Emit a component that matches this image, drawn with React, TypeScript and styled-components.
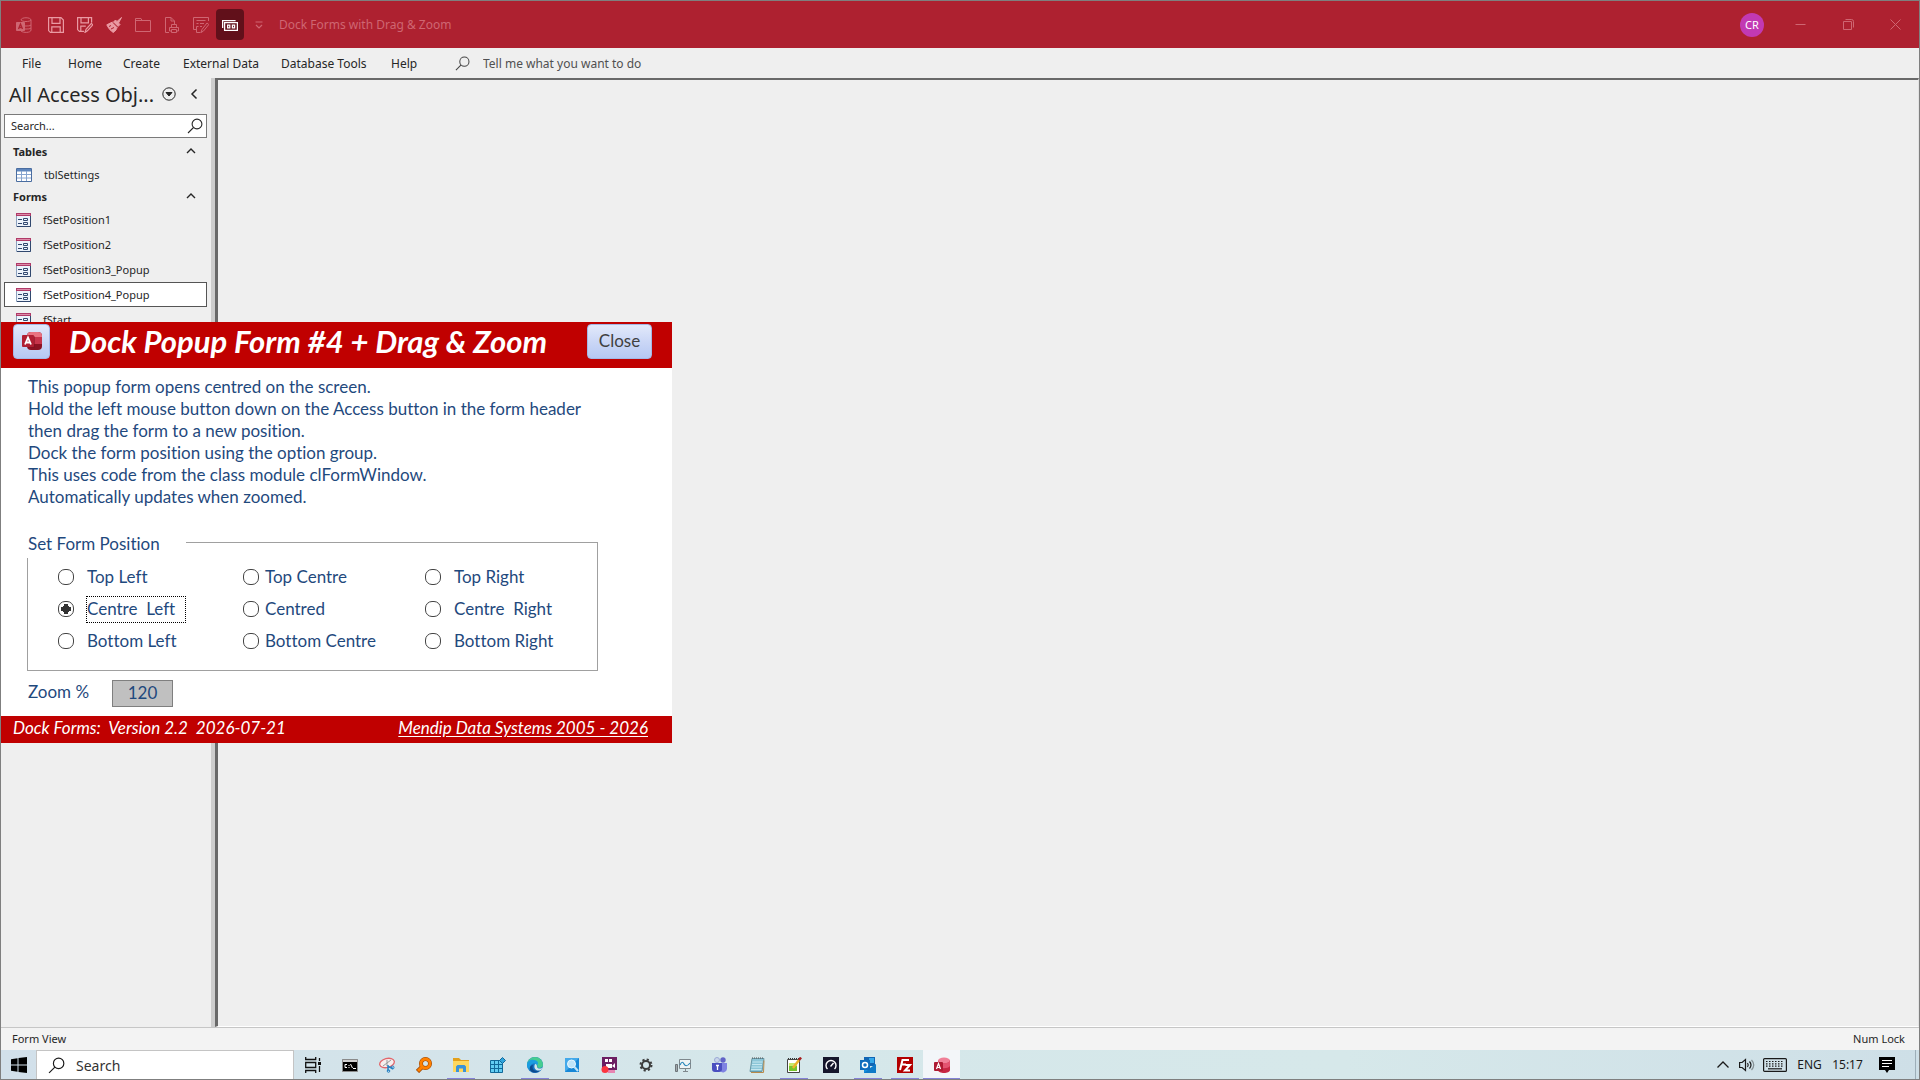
import React, { useState } from "react";
import styled, { createGlobalStyle, css } from "styled-components";

const ui = `"Noto Sans", "Open Sans", sans-serif`;
const form = `Lato, "Open Sans", sans-serif`;

const Global = createGlobalStyle`
  *, *::before, *::after { box-sizing: border-box; }
  body { margin: 0; font-family: ${ui}; color: #262626; overflow: hidden; }
  button, input { font: inherit; color: inherit; }
  button { border: 0; padding: 0; background: none; }
`;

const Screen = styled.div`
  position: relative;
  display: flex;
  flex-direction: column;
  height: 100vh;
  border: 1px solid #7f7f7f;
  background: #efefef;
  font-size: 12px;
`;

/* title bar */
const TitleBar = styled.header`
  display: flex;
  align-items: center;
  flex: 0 0 47px;
  padding-left: 9px;
  background: #ae2130;
  color: #cf6672;
`;
const AppMark = styled.span`
  display: grid;
  place-items: center;
  width: 28px;
  margin-right: 4px;
`;
const QuickBar = styled.div`
  display: flex;
  gap: 1px;
`;
const QuickButton = styled.button<{ $on?: boolean; $bright?: boolean }>`
  display: grid;
  place-items: center;
  width: 28px;
  height: 31px;
  border-radius: 4px;
  color: ${(p) => (p.$on ? "#fff" : p.$bright ? "#ea9aa3" : "#cf6672")};
  background: ${(p) => (p.$on ? "#61101a" : "transparent")};
`;
const DocTitle = styled.span`
  flex: 1;
  margin-left: 6px;
`;
const Avatar = styled.button`
  width: 24px;
  height: 24px;
  margin-right: 12px;
  border-radius: 50%;
  background: #c239b3;
  color: #fff;
  font-size: 11px;
`;
const WindowButton = styled.button`
  display: grid;
  place-items: center;
  width: 48px;
  height: 46px;
  &:last-child { width: 47px; }
`;

/* ribbon tabs */
const MenuBar = styled.nav`
  display: flex;
  align-items: center;
  flex: 0 0 30px;
  padding-left: 21px;
`;
const MenuItem = styled.button<{ $w: number }>`
  width: ${(p) => p.$w}px;
  text-align: left;
`;
const TellMe = styled.label`
  display: flex;
  align-items: center;
  gap: 13px;
  color: #444;
`;
const TellInput = styled.input`
  width: 220px;
  padding: 0;
  border: 0;
  outline: 0;
  background: none;
  &::placeholder { color: #505050; opacity: 1; }
`;

/* work area */
const Work = styled.div`
  display: flex;
  flex: 1;
  min-height: 0;
`;
const NavPane = styled.aside`
  flex: 0 0 208px;
  padding: 0 4px 0 3px;
`;
const NavHead = styled.div`
  display: flex;
  align-items: center;
  gap: 5px;
  height: 32px;
  padding: 0 3px 0 5px;
`;
const NavTitle = styled.h1`
  flex: 1;
  margin: 0;
  font-size: 20px;
  font-weight: 400;
  line-height: 30px;
  padding-top: 2px;
  white-space: nowrap;
`;
const NavIcon = styled.button`
  display: grid;
  place-items: center;
  width: 20px;
  height: 28px;
`;
const NavSearch = styled.label`
  display: flex;
  align-items: center;
  height: 24px;
  margin: 4px 0;
  padding: 0 3px 0 6px;
  border: 1px solid #7a7a7a;
  background: #fff;
`;
const NavInput = styled.input`
  flex: 1;
  min-width: 0;
  padding: 0 0 2px;
  border: 0;
  outline: 0;
  font-size: 11px;
  background: none;
  &::placeholder { color: #262626; opacity: 1; }
`;
const GroupHead = styled.button`
  display: flex;
  align-items: center;
  justify-content: space-between;
  width: 100%;
  height: 20px;
  padding: 0 11px 2px 9px;
  font-size: 11px;
  font-weight: 700;
`;
const NavItem = styled.button<{ $on?: boolean }>`
  display: flex;
  align-items: center;
  gap: 12px;
  width: 100%;
  height: 25px;
  padding: 0 11px;
  border: 1px solid ${(p) => (p.$on ? "#555" : "transparent")};
  background: ${(p) => (p.$on ? "#fff" : "transparent")};
  font-size: 11px;
`;
const Splitter = styled.div`
  flex: 0 0 4px;
  background: #cdcdcd;
`;
const Canvas = styled.main`
  flex: 1;
  border: 1px solid #fff;
  border-top: 2px solid #696969;
  border-left: 3px solid #696969;
  border-right-color: #e3e3e3;
`;
const StatusBar = styled.footer`
  display: flex;
  align-items: center;
  justify-content: space-between;
  flex: 0 0 23px;
  padding: 0 14px 1px 11px;
  border-top: 1px solid #c6c6c6;
  background: #f3f3f3;
  font-size: 11px;
`;

/* taskbar */
const TaskBar = styled.div`
  display: flex;
  flex: 0 0 29px;
  background: linear-gradient(90deg, #d2e0ea, #d5e7ea 40%, #d6e8ea 70%, #cedfe7);
  color: #1a1a1a;
`;
const StartButton = styled.button`
  display: grid;
  place-items: center;
  width: 35px;
`;
const TaskSearch = styled.label`
  display: flex;
  align-items: center;
  gap: 11px;
  width: 258px;
  padding-left: 11px;
  border: 1px solid #c4c4c4;
  border-bottom: 0;
  background: #fff;
`;
const TaskInput = styled.input`
  width: 180px;
  padding: 0;
  border: 0;
  outline: 0;
  font-size: 14px;
  &::placeholder { color: #333; opacity: 1; }
`;
const Apps = styled.div`
  display: flex;
  flex: 1;
`;
const AppButton = styled.button<{ $open?: boolean; $on?: boolean }>`
  display: grid;
  place-items: center;
  width: 37px;
  background: ${(p) => (p.$on ? "#f3f6f9" : "transparent")};
  ${(p) =>
    (p.$open || p.$on) &&
    css`
      background-image: linear-gradient(#8482d6, #8482d6);
      background-repeat: no-repeat;
      background-position: center bottom;
      background-size: ${p.$on ? "100%" : "28px"} 1px;
    `}
`;
const Tray = styled.div`
  display: flex;
  align-items: center;
`;
const TrayButton = styled.button<{ $w: number }>`
  display: grid;
  place-items: center;
  width: ${(p) => p.$w}px;
  height: 100%;
`;
const ShowDesktop = styled.button`
  width: 4px;
  height: 100%;
  margin-left: 8px;
  border-left: 1px solid #9daeb8;
`;

/* popup form window */
const Popup = styled.section`
  position: absolute;
  left: 0;
  top: 321px;
  width: 671px;
  background: #fff;
  color: #1f497d;
  font-family: ${form};
  font-size: 17px;
  font-variant-ligatures: none;
`;
const PopupHead = styled.header`
  display: flex;
  align-items: flex-start;
  height: 46px;
  padding: 2px 20px 0 12px;
  background: #c00000;
`;
const FormButton = styled.button<{ $w: number }>`
  display: grid;
  place-items: center;
  width: ${(p) => p.$w}px;
  height: 35px;
  padding-bottom: 2px;
  border: 1px solid #a4b8e6;
  border-radius: 4px;
  background: linear-gradient(#e2e9fa, #cbd7f6 50%, #b6c8f3);
  color: #404040;
`;
const PopupTitle = styled.h2`
  flex: 1;
  margin: 0;
  padding-left: 19px;
  color: #fff;
  font-size: 31px;
  font-style: italic;
  font-weight: 700;
  line-height: 34px;
  white-space: nowrap;
`;
const PopupBody = styled.div`
  padding: 8px 27px 9px;
`;
const Lines = styled.p`
  margin: 0 0 18px;
  line-height: 22px;
`;
const Options = styled.fieldset`
  width: 571px;
  margin: 0 0 9px -1px;
  padding: 3px 0 13px 30px;
  border: 1px solid #a0a0a0;
`;
const Legend = styled.legend`
  width: 159px;
  height: 32px;
  margin-left: -31px;
  padding-left: 1px;
  background: #fff;
  line-height: 36px;
`;
const OptionGrid = styled.div`
  display: grid;
  grid-template-columns: 185px 182px 1fr;
  grid-auto-rows: 32px;
`;
const Option = styled.label<{ $gap: number }>`
  display: flex;
  align-items: center;
  gap: ${(p) => p.$gap}px;
`;
const Radio = styled.input`
  appearance: none;
  display: grid;
  place-items: center;
  width: 16px;
  height: 16px;
  margin: 0;
  border: 1px solid #444;
  border-radius: 7px;
  background: #fff;
  &:checked::before {
    content: "";
    width: 10px;
    height: 10px;
    background: #333;
    clip-path: polygon(30% 0, 70% 0, 70% 20%, 80% 20%, 80% 30%, 100% 30%, 100% 70%, 80% 70%, 80% 80%, 70% 80%, 70% 100%, 30% 100%, 30% 80%, 20% 80%, 20% 70%, 0 70%, 0 30%, 20% 30%, 20% 20%, 30% 20%);
  }
`;
const OptionText = styled.span<{ $focus?: boolean }>`
  height: 25px;
  line-height: 24px;
  padding-right: 10px;
  white-space: pre;
  outline: ${(p) => (p.$focus ? "1px dotted #000" : "0")};
`;
const ZoomRow = styled.div`
  display: flex;
  align-items: center;
`;
const ZoomLabel = styled.label`
  width: 84px;
  height: 27px;
  line-height: 24px;
`;
const ZoomInput = styled.input`
  width: 61px;
  height: 27px;
  padding: 0 0 2px;
  border: 1px solid #7f7f7f;
  background: #c0c0c0;
  text-align: center;
`;
const PopupFoot = styled.footer`
  display: flex;
  justify-content: space-between;
  height: 27px;
  padding: 0 24px 0 12px;
  background: #c00000;
  color: #fff;
  font-style: italic;
  line-height: 23px;
  white-space: pre;
`;
const FootLink = styled.a`
  color: inherit;
  text-underline-offset: 2px;
`;

/* icons */
type Kids = { children: React.ReactNode; s?: number; w?: number; sw?: number };
const Line = ({ children, s = 16, w, sw = 1 }: Kids) => (
  <svg width={w ?? s} height={s} viewBox={`0 0 ${w ?? s} ${s}`} fill="none" stroke="currentColor" strokeWidth={sw} aria-hidden="true">
    {children}
  </svg>
);
const Magnifier = ({ s = 16 }: { s?: number }) => (
  <svg width={s} height={s} viewBox="0 0 16 16" fill="none" stroke="currentColor" strokeWidth="1.1" aria-hidden="true">
    <circle cx="10" cy="6" r="4.9" />
    <path d="M6.5 9.5 1 15" />
  </svg>
);
const Up = () => (
  <Line s={10} sw={1.4}><path d="M1 7l4-4 4 4" /></Line>
);

const quick: [string, boolean, boolean, React.ReactNode][] = [
  ["Save", true, false, <Line sw={1.2}><path d="M.6.6h12.4l2.4 2.4v12.4H2.4L.6 13.6zM4 .6v5.8h8V.6M3.8 15.4V9.8h8.4v5.6" /></Line>],
  ["Save As", true, false, <Line sw={1.2}><path d="M7 14.4H2.4L.6 12.6V.6h14v5M4 .6v5.2h7.4V.6M3.8 14.4V9.2h5M8 15.4l1-3 5.4-6 1.4 1.4-5.4 6z" /></Line>],
  ["Format Painter", true, false, <Line><path fill="currentColor" d="M15.5.5 11 4.5 9.500 3 7.500 5 12 9.500 14 7.500 12.500 6z" /><path fill="currentColor" d="M6.500 5 .8 7.800C2 10.500 4.500 14 7.300 15.500 9.500 14 10.800 12 11.200 10z" /><path stroke="#ae2130" d="M7 5.500 11.500 10M3 9.500l2-1M5 12l3-1.500" /></Line>],
  ["Open", false, false, <Line><path d="M.5 1.500h5.500l1 2h8.500v11H.5zM.5 3.500h6.500" /></Line>],
  ["Print Preview", false, false, <Line><path d="M5 15.500H1.500V.5H7L10.500 4v3M7 .5V4h3.500M7.500 10.500V7.500h5v3M7.500 14H5.500v-3.500h9V14h-2M7.500 12.500h5v3h-5z" /></Line>],
  ["Edit List", false, false, <Line><path d="M3 12.500H.5V.5h15V4M3.500 3.500h9M3.500 6.500h2M7 6.500h4M3.500 9.500h2M3.500 15.500V9.500M7 9.500h2M3.500 15.500h4M8 15.500l1-3L14 6l1.800 1.500L10.500 14z" /></Line>],
  ["Navigation Options", false, true, <Line sw={1.3}><path d="M.6 11V3.600h13M2.600 5.600h12.800v7.800H2.600zM5.600 8.200h2.200v2.600H5.600zM10.400 8.200h2.200v2.600h-2.200z" /></Line>],
  ["Customize", false, false, <Line s={8} sw={1.2}><path d="M.5 1h7M1 4l3 3 3-3" /></Line>],
];

const TableIcon = () => (
  <svg width="16" height="14" viewBox="0 0 16 14" aria-hidden="true">
    <path fill="#fff" stroke="#4a6da0" d="M.5.5h15v13H.5z" />
    <path fill="#5f86bd" d="M1 1h14v2.500H1z" />
    <path stroke="#86a4cf" d="M1 6.500h14M1 10h14M5.500 3v10M10.500 3v10" />
  </svg>
);
const FormIcon = () => (
  <svg width="15" height="14" viewBox="0 0 15 14" aria-hidden="true">
    <path fill="#edf3fb" stroke="#8ba0bd" d="M.5.5h14v13H.5z" />
    <path fill="#b03a68" d="M0 0h15v3H0z" />
    <path fill="#dd8ca9" d="M1 1h13v1H1z" />
    <path stroke="#31486e" fill="none" d="M2 6.500h4M2 10.500h4M7.500 5.500h4v2h-4zM7.500 9.500h4v2h-4zM14.500 3v10.500H1" />
  </svg>
);
const AccessIcon = ({ s = 20 }: { s?: number }) => (
  <svg width={s} height={s} viewBox="0 0 20 20" aria-hidden="true">
    <rect x="5" y="1" width="15" height="18" rx="4" fill="#8c1222" />
    <path fill="#e97381" d="M5 5a4 4 0 0 1 4-4h7a4 4 0 0 1 4 4v3H5z" />
    <path fill="#c7344a" d="M5 6h15v7H5z" />
    <path fill="#7c0f1e" d="M7 5h5a1 1 0 0 1 1 1v10a1 1 0 0 1-1 1H6z" opacity=".5" />
    <rect x="0" y="4" width="12" height="12" rx="1" fill="#b01f33" />
    <path fill="none" stroke="#fff" strokeWidth="1.800" d="m3 13.500 3-7 3 7M4 11.500h4" />
  </svg>
);

const Pic = ({ children, w = 16 }: { children: React.ReactNode; w?: number }) => (
  <svg width={w} height="16" viewBox={`0 0 ${w} 16`} fill="none" aria-hidden="true">{children}</svg>
);
const apps: [string, string, React.ReactNode][] = [
  ["Task View", "", <Pic><path stroke="#111" strokeWidth="1.300" d="M.7 0v2.500h10V0M.7 16v-2.500h10V16M.7 5.500h10v5H.7zM14.500 1v3M14.500 9v6" /><path fill="#111" d="M13 5h3v3h-3z" /></Pic>],
  ["Command Prompt", "", <Pic><path fill="#000" stroke="#8a8a8a" d="M.5 2.500h15v12H.5z" /><path fill="#cfcfcf" d="M1 3h14v2H1z" /><path stroke="#fff" d="M5 7.500H3v3h2M7 8v1M7 10v1M8.500 7l2 4M11 11.500h3" /></Pic>],
  ["Snipping Tool", "", <Pic><ellipse cx="8" cy="6" rx="7.500" ry="4.500" transform="rotate(-15 8 6)" fill="#f7eeee" stroke="#e2666b" strokeWidth="1.300" /><path stroke="#999" d="m4 9 8-6M8 3v6" /><path stroke="#2581c4" strokeWidth="1.500" d="M9 8v6M9 9.500l5 2" /><circle cx="13.500" cy="10.500" r="1.500" stroke="#2581c4" /><circle cx="9.500" cy="14" r="1.300" stroke="#2581c4" /></Pic>],
  ["Everything", "", <Pic><path stroke="#9d4500" strokeWidth="4.500" d="M1.500 14.500 6 10" /><circle cx="9.500" cy="6.500" r="4.500" stroke="#9d4500" strokeWidth="4" /><path stroke="#ff8000" strokeWidth="3" d="M2 14 6.500 9.500" /><circle cx="9.500" cy="6.500" r="4.500" stroke="#ff8000" strokeWidth="2.800" /></Pic>],
  ["File Explorer", "open", <Pic><path fill="#e3a01b" d="M0 1h6l2 2h8v3H0z" /><path fill="#ffd75e" d="M0 4h16v11H0z" /><path fill="#3b93d9" d="M3 15V9.500L4.500 8h7L13 9.500V15h-3v-3.500H6V15z" /></Pic>],
  ["Registry Editor", "", <Pic><path fill="#62cdf3" stroke="#11699a" d="M.5 3.500h12v12H.5z" /><path stroke="#11699a" d="M4.500 3.500v12M8.500 3.500v12M.5 7.500h12M.5 11.500h12" /><path fill="#30a4dc" stroke="#11699a" d="m12.500.5 3 3-3 3-3-3z" /></Pic>],
  ["Microsoft Edge", "open", <Pic><circle cx="8" cy="8" r="8" fill="#1674c4" /><path fill="#46cd91" d="M0 8A8 8 0 0 1 16 8c0 3-4 4-6 2 1-1 0-4-3-4-4 0-7 2-7 2" /><path fill="#1c9de0" d="M0 8c0-3 3-6 7-5 4 0 5 4 3 5-2-3-8-2-7 5-2-1-3-3-3-5" /><path fill="#0c4b8e" d="M6 8c-2 5 3 7 7 5-2 3-6 3-8 2-4-3-2-7 1-7" /><path fill="#d5e7ea" d="M8 7c2 0 2 2 2 3 1 2 4 2 6 0l-2 3c-5 2-8-2-6-6" /></Pic>],
  ["Search Tool", "", <Pic><path fill="#1787d6" d="M1 1h14v14H1z" /><path fill="#43a9ea" d="M1 1h14l-14 14z" /><circle cx="7.500" cy="7" r="4" fill="#bfe4f8" stroke="#e9f7ff" /><path stroke="#bfe4f8" strokeWidth="2" d="m10.500 10 3.500 4" /></Pic>],
  ["Screen Recorder", "", <Pic><path fill="#6c1f63" d="M1 0h15v13H1z" /><path fill="#fff" d="M4 2h3v3H4zM8 2h3v3H8zM5 7h6v4H5zM11 9l3-3v5z" /><path fill="#e785b2" d="M7 13h7v3H7z" /><circle cx="4" cy="12.500" r="3.500" fill="#fb3640" /></Pic>],
  ["Settings", "", <Pic><circle cx="8" cy="8" r="4" stroke="#3d3d3d" strokeWidth="2" /><circle cx="8" cy="8" r="5.500" stroke="#3d3d3d" strokeWidth="2" strokeDasharray="2.160 2.160" /></Pic>],
  ["Performance Monitor", "", <Pic><path fill="#eef3f5" stroke="#7f888d" d="M4.500 2.500h11v9h-11zM8 14.500h5M10.500 12v2" /><path stroke="#2684b8" strokeWidth="1.200" d="M5 8c2-4 3-3 4-1s3 3 6-1" /><path fill="#a1a9ad" stroke="#6d7478" d="M.5 7.500h2v7h-2z" /></Pic>],
  ["Microsoft Teams", "", <Pic><circle cx="5" cy="3" r="2.500" fill="#c9d6ea" stroke="#9ba9d6" /><circle cx="11" cy="3" r="2.700" fill="#6264c7" /><path fill="#7f83e2" d="M8 6h7v6a4 4 0 0 1-7 2z" /><path fill="#4a4fc0" d="M0 6h10v7a3 3 0 0 1-3 2H3a3 3 0 0 1-3-3z" /><path stroke="#fff" strokeWidth="1.300" d="M4 8.500h3M5.500 8.500V13" /></Pic>],
  ["Notepad", "", <Pic><path fill="#8cc6d8" stroke="#6a98a6" d="M3 1.500h12l-2 13H1z" /><path stroke="#c5e7ef" d="M3.500 5h10M3 7.500h10M2.500 10H13M2 12.500h10.500" /><path stroke="#555" strokeDasharray="1 1" d="M3 1h12" /><path stroke="#b88a4a" d="M2 15.500h12.500l.5-12" /></Pic>],
  ["Notepad++", "open", <Pic><path fill="#fff" stroke="#444" d="M1.500 2.500h12v13h-12z" /><path fill="#75c52d" d="M3 8h8v6H3z" /><path fill="#c8e86b" d="M3 6h8v3H3z" /><path stroke="#333" strokeDasharray="1 1" d="M2 1.500h12" /><path stroke="#edb32c" strokeWidth="2.500" d="m7 11 6-8" /><path stroke="#a81f1f" strokeWidth="2.500" d="m13 3 2-2.500" /></Pic>],
  ["Speed Test", "", <Pic><path fill="#15162c" d="M0 0h16v16H0z" /><path stroke="#fff" strokeWidth="1.400" d="M4.500 12a5 5 0 1 1 7 0M7.500 9.500 10.500 6" /></Pic>],
  ["Outlook", "open", <Pic><path fill="#1065b4" d="M4 0h11v9H4z" /><path fill="#34a8ea" d="M9 1h5v5H9z" /><path fill="#1490df" d="M4 8l6 3 6-4v9H4z" /><path fill="#0a63b0" d="m4 16 12-9v9z" opacity=".5" /><path fill="#0f6cbd" d="M0 3h10v10H0z" /><circle cx="5" cy="8" r="2.500" stroke="#fff" strokeWidth="1.500" /></Pic>],
  ["FileZilla", "open", <Pic><path fill="#b30000" d="M0 0h16v16H0z" /><path stroke="#fff" strokeWidth="2" d="M3 13 5.500 3H12M4 7.500h5M8.500 8H13l-5 5.500h5" /></Pic>],
  ["Microsoft Access", "on", <Pic><path fill="#c72643" d="M4 3v10c0 4 12 4 12 0V3z" /><ellipse cx="10" cy="3.500" rx="6" ry="3" fill="#f08098" /><path fill="#e35370" d="M4 4c2 3 10 3 12 0v5c-2 3-10 3-12 0z" /><rect y="5" width="9" height="9" rx="1" fill="#ae1b33" /><path stroke="#fff" strokeWidth="1.200" d="m2.500 12 2-5.500 2 5.500M3 10.500h3" /></Pic>],
];

const menus: [string, number][] = [
  ["File", 46], ["Home", 55], ["Create", 60], ["External Data", 98], ["Database Tools", 110], ["Help", 64],
];
const forms = ["fSetPosition1", "fSetPosition2", "fSetPosition3_Popup", "fSetPosition4_Popup", "fStart"];
const positions = [
  "Top Left", "Top Centre", "Top Right",
  "Centre  Left", "Centred", "Centre  Right",
  "Bottom Left", "Bottom Centre", "Bottom Right",
];

export default function App() {
  const [pos, setPos] = useState("Centre  Left");
  return (
    <>
      <Global />
      <Screen>
        <TitleBar>
          <AppMark>
            <Line><path d="M5 3c0-3 10-3 10 0v10c0 3-8 3-10 1M5 3c1 2 9 2 10 0M9 9c3 0 5 0 6-1M9 12c3 0 5 0 6-1" /><path fill="currentColor" d="M.5 5.500h8v8h-8z" /><path stroke="#ae2130" strokeWidth="1.300" d="m2.500 12 2-5 2 5M3.500 10.500h2" /></Line>
          </AppMark>
          <QuickBar>
            {quick.map(([name, bright, on, icon]) => (
              <QuickButton key={name} aria-label={name} $bright={bright} $on={on}>{icon}</QuickButton>
            ))}
          </QuickBar>
          <DocTitle>Dock Forms with Drag &amp; Zoom</DocTitle>
          <Avatar>CR</Avatar>
          <WindowButton aria-label="Minimize"><Line s={11}><path d="M.5 5.500h10" /></Line></WindowButton>
          <WindowButton aria-label="Restore"><Line s={11}><path d="M.5 2.500h8v8h-8zM2.500.5h6a2 2 0 0 1 2 2v6" /></Line></WindowButton>
          <WindowButton aria-label="Close window"><Line s={11}><path d="m.5.5 10 10M10.500.5l-10 10" /></Line></WindowButton>
        </TitleBar>

        <MenuBar>
          {menus.map(([name, w]) => <MenuItem key={name} $w={w}>{name}</MenuItem>)}
          <TellMe>
            <Magnifier s={15} />
            <TellInput placeholder="Tell me what you want to do" aria-label="Tell me" />
          </TellMe>
        </MenuBar>

        <Work>
          <NavPane>
            <NavHead>
              <NavTitle>All Access Obj...</NavTitle>
              <NavIcon aria-label="Choose category"><Line s={14}><circle cx="7" cy="7" r="6.200" /><path fill="currentColor" d="M4 5.500h6L7 9z" /></Line></NavIcon>
              <NavIcon aria-label="Collapse pane"><Line s={12} sw={1.5}><path d="M8.500 1.500 4 6l4.500 4.500" /></Line></NavIcon>
            </NavHead>
            <NavSearch>
              <NavInput placeholder="Search..." aria-label="Search objects" />
              <Magnifier />
            </NavSearch>
            <GroupHead>Tables<Up /></GroupHead>
            <NavItem><TableIcon />tblSettings</NavItem>
            <GroupHead>Forms<Up /></GroupHead>
            {forms.map((f) => (
              <NavItem key={f} $on={f === "fSetPosition4_Popup"}><FormIcon />{f}</NavItem>
            ))}
          </NavPane>
          <Splitter />
          <Canvas />
        </Work>

        <StatusBar><span>Form View</span><span>Num Lock</span></StatusBar>

        <TaskBar>
          <StartButton aria-label="Start">
            <Pic><path fill="#000" d="M0 2.200 6.500 1.300v6.200H0zM7.500 1.100 16 0v7.500H7.500zM0 8.500h6.500v6.200L0 13.800zM7.500 8.500H16V16l-8.500-1.100z" /></Pic>
          </StartButton>
          <TaskSearch>
            <Magnifier s={17} />
            <TaskInput placeholder="Search" aria-label="Search" />
          </TaskSearch>
          <Apps>
            {apps.map(([name, state, icon]) => (
              <AppButton key={name} aria-label={name} $open={state === "open"} $on={state === "on"}>{icon}</AppButton>
            ))}
          </Apps>
          <Tray>
            <TrayButton $w={22} aria-label="Hidden icons"><Line s={12} sw={1.3}><path d="M.5 8.500 6 3l5.500 5.500" /></Line></TrayButton>
            <TrayButton $w={25} aria-label="Volume"><Line sw={1.2}><path d="M.6 5.500h2.500L6.500 2.500v11L3.100 10.500H.6zM8.500 6q1.500 2 0 4M10.500 4.500q3 3.500 0 7" /><path opacity=".4" d="M12.500 3q4.500 5 0 10" /></Line></TrayButton>
            <TrayButton $w={32} aria-label="Touch keyboard"><Line s={14} w={24} sw={1.2}><rect x=".6" y=".6" width="22.800" height="12.800" rx="1" /><path strokeDasharray="1.500 1.500" d="M3 3.500h18M3 5.800h18M3 8.100h18" /><path d="M5 10.800h14" /></Line></TrayButton>
            <TrayButton $w={37} aria-label="Language">ENG</TrayButton>
            <TrayButton $w={39} aria-label="Clock">15:17</TrayButton>
            <TrayButton $w={40} aria-label="Notifications"><Pic><path fill="#000" d="M0 0h16v13h-6l-2 3-2-3H0z" /><path stroke="#fff" d="M3 3.500h10M3 6.500h10M3 9.500h7" /></Pic></TrayButton>
            <ShowDesktop aria-label="Show desktop" />
          </Tray>
        </TaskBar>

        <Popup>
          <PopupHead>
            <FormButton $w={37} aria-label="Drag form"><AccessIcon /></FormButton>
            <PopupTitle>Dock Popup Form #4 + Drag &amp; Zoom</PopupTitle>
            <FormButton $w={65}>Close</FormButton>
          </PopupHead>
          <PopupBody>
            <Lines>
              This popup form opens centred on the screen.<br />
              Hold the left mouse button down on the Access button in the form header<br />
              then drag the form to a new position.<br />
              Dock the form position using the option group.<br />
              This uses code from the class module clFormWindow.<br />
              Automatically updates when zoomed.
            </Lines>
            <Options>
              <Legend>Set Form Position</Legend>
              <OptionGrid>
                {positions.map((p, i) => (
                  <Option key={p} $gap={i % 3 === 1 ? 6 : 13}>
                    <Radio type="radio" name="position" checked={pos === p} onChange={() => setPos(p)} />
                    <OptionText $focus={pos === p}>{p}</OptionText>
                  </Option>
                ))}
              </OptionGrid>
            </Options>
            <ZoomRow>
              <ZoomLabel htmlFor="zoom">Zoom %</ZoomLabel>
              <ZoomInput id="zoom" defaultValue="120" />
            </ZoomRow>
          </PopupBody>
          <PopupFoot>
            <span>Dock Forms:  Version 2.2  2026-07-21</span>
            <FootLink href="#mendip">Mendip Data Systems 2005 - 2026</FootLink>
          </PopupFoot>
        </Popup>
      </Screen>
    </>
  );
}
